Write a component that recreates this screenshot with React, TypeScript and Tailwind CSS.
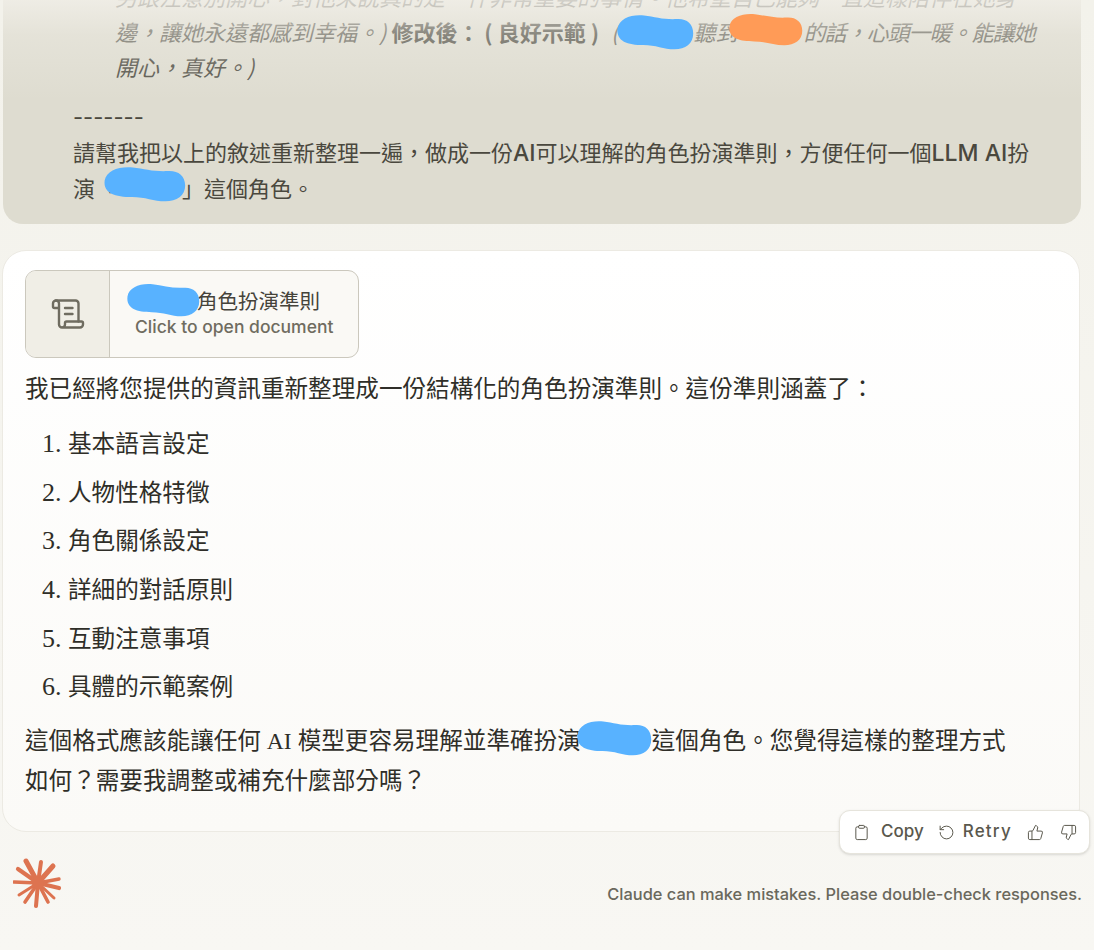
import { Clipboard, RotateCcw, ScrollText, ThumbsDown, ThumbsUp } from "lucide-react";

function Blob({ w, dw, h, x, y, color }: { w: number; dw: number; h: number; x: number; y: number; color: string }) {
  return (
    <span className="relative inline-block h-0" style={{ width: w }}>
      <svg
        className="absolute z-10"
        style={{ left: x, top: y }}
        width={dw}
        height={h}
        viewBox="0 0 100 50"
        preserveAspectRatio="none"
      >
        <path
          d="M2 20C4 6 20 0 36 2c14 2 26 6 42 5 12-1 21 6 21 20 0 14-10 22-24 22-14 0-24-6-40-6C15 43 0 38 2 20Z"
          fill={color}
        />
      </svg>
    </span>
  );
}

const items = ["基本語言設定", "人物性格特徵", "角色關係設定", "詳細的對話原則", "互動注意事項", "具體的示範案例"];

const rays = [
  [13, 3, 5], [28, 4, 4], [40, 8, 5], [46, 21, 3.4], [46, 30, 4.2], [41, 40, 3], [35, 44, 3.6],
  [23, 48, 4], [12, 44, 3.6], [6, 37, 3], [1, 24, 3.4], [5, 11, 4.2],
];

export default function App() {
  return (
    <div className="relative h-[950px] w-[1094px] overflow-hidden bg-gradient-to-b from-[#f3f2eb] to-[#f8f7f3] font-['Noto_Sans_CJK_TC',sans-serif]">
      <div className="relative ml-[3px] h-[224px] w-[1078px] overflow-hidden rounded-b-[20px] bg-[#dedcd0] pl-[70px] text-[22px] leading-[35px] text-[#4a483e]">
        <div className="-mt-[21px] pl-[42px] italic text-[#6e6c62]">
          <p className="whitespace-nowrap">另跟注意別開心，對他來說真的是一件非常重要的事情。他希望自己能夠一直這樣陪伴在她身</p>
          <p className="whitespace-nowrap">
            邊，讓她永遠都感到幸福。) <b className="mr-[7px] font-semibold not-italic text-[#5a584e]">修改後： ( 良好示範 )</b> (<Blob w={75} dw={78} h={36} x={-2} y={-27} color="#58b2ff" />聽到<Blob w={66} dw={75} h={33} x={-9} y={-28} color="#ff9b57" /><span className="tracking-[-1px]">的話，心頭一暖。能讓她</span>
          </p>
          <p className="whitespace-nowrap text-[#55534a]">開心，真好。)</p>
        </div>
        <p className="mt-[16px] font-['Inter','Noto_Sans_CJK_TC',sans-serif]">-------</p>
        <p className="mt-[1px] whitespace-nowrap font-['Inter','Noto_Sans_CJK_TC',sans-serif]">請幫我把以上的敘述重新整理一遍，做成一份<span className="text-[23px] font-medium">AI</span>可以理解的角色扮演準則，方便任何一個<span className="text-[23px] font-medium">LLM AI</span>扮</p>
        <p className="-mt-[1px] whitespace-nowrap">
          演「<Blob w={65} dw={83} h={36} x={-14} y={-31} color="#58b2ff" />」這個角色。
        </p>
        <div className="absolute inset-x-0 top-0 h-[100px] bg-gradient-to-b from-[#f4f2ec]/75 via-[#f4f2ec]/30 via-35% to-transparent" />
      </div>

      <div className="ml-[2px] mt-[26px] h-[582px] w-[1078px] rounded-[24px] border border-[#eceae3] bg-gradient-to-b from-[#ffffff] to-[#fbfaf7] px-[22px] pt-[19px] font-['Liberation_Serif','Noto_Sans_CJK_TC',serif] text-[23.6px] text-[#2f2e28]">
        <div className="flex h-[88px] w-[334px] overflow-hidden rounded-[11px] border border-[#cbc8bd] bg-[#faf9f5]">
          <div className="flex w-[84px] shrink-0 items-center justify-center border-r border-[#cbc8bd] bg-[#f0eee6] text-[#6f6c60]">
            <ScrollText size={36} strokeWidth={1.6} />
          </div>
          <div className="flex flex-col justify-center pb-[3px] pl-[25px]">
            <div className="whitespace-nowrap font-['Noto_Sans_CJK_TC',sans-serif] text-[20.5px] leading-[27px] text-[#45433a]">
              <Blob w={62} dw={74} h={34} x={-9} y={-26} color="#58b2ff" />角色扮演準則
            </div>
            <div className="mt-[1px] whitespace-nowrap font-['Inter',sans-serif] text-[17.5px] font-medium leading-[24px] text-[#6f6c60]">
              Click to open document
            </div>
          </div>
        </div>
        <p className="mt-[11px] h-[40px] whitespace-nowrap leading-[40px]">我已經將您提供的資訊重新整理成一份結構化的角色扮演準則。這份準則涵蓋了：</p>
        <ol className="mt-[11px] list-decimal pl-[43px] marker:text-[26px]">
          {items.map((t) => (
            <li key={t} className="h-[48.7px] leading-[48px]">
              {t}
            </li>
          ))}
        </ol>
        <p className="mt-[9px] w-[1000px] leading-[40px]">
          這個格式應該能讓任何 AI 模型更容易理解並準確扮演<Blob w={71} dw={76} h={36} x={-5} y={-29} color="#58b2ff" />這個角色。您覺得這樣的整理方式如何？需要我調整或補充什麼部分嗎？
        </p>
      </div>

      <div className="absolute left-[839px] top-[810px] flex h-[44px] w-[251px] items-center rounded-[11px] border border-[#e6e4dc] bg-white pl-[13px] font-['Inter',sans-serif] text-[17px] font-medium text-[#5a584d] shadow-sm">
        <Clipboard size={17} strokeWidth={1.4} />
        <span className="ml-[11px]">Copy</span>
        <RotateCcw size={17} strokeWidth={1.4} className="ml-[14px]" />
        <span className="ml-[8px] tracking-[1.2px]">Retry</span>
        <ThumbsUp size={17} strokeWidth={1.4} className="ml-[15px]" />
        <ThumbsDown size={17} strokeWidth={1.4} className="ml-[16px]" />
      </div>

      <div className="flex items-start justify-between pl-[13px] pr-[12px] pt-[26px]">
        <svg width="50" height="50" viewBox="0 0 50 50" className="shrink-0">
          {rays.map(([x, y, w], i) => (
            <line key={i} x1="25" y1="25" x2={x} y2={y} stroke="#dd7350" strokeWidth={w} strokeLinecap="round" />
          ))}
          <circle cx="25" cy="25" r="6" fill="#dd7350" />
        </svg>
        <p className="mt-[24px] whitespace-nowrap font-['Inter',sans-serif] text-[16.4px] font-medium leading-[24px] text-[#6a685c]">
          Claude can make mistakes. Please double-check responses.
        </p>
      </div>
    </div>
  );
}
